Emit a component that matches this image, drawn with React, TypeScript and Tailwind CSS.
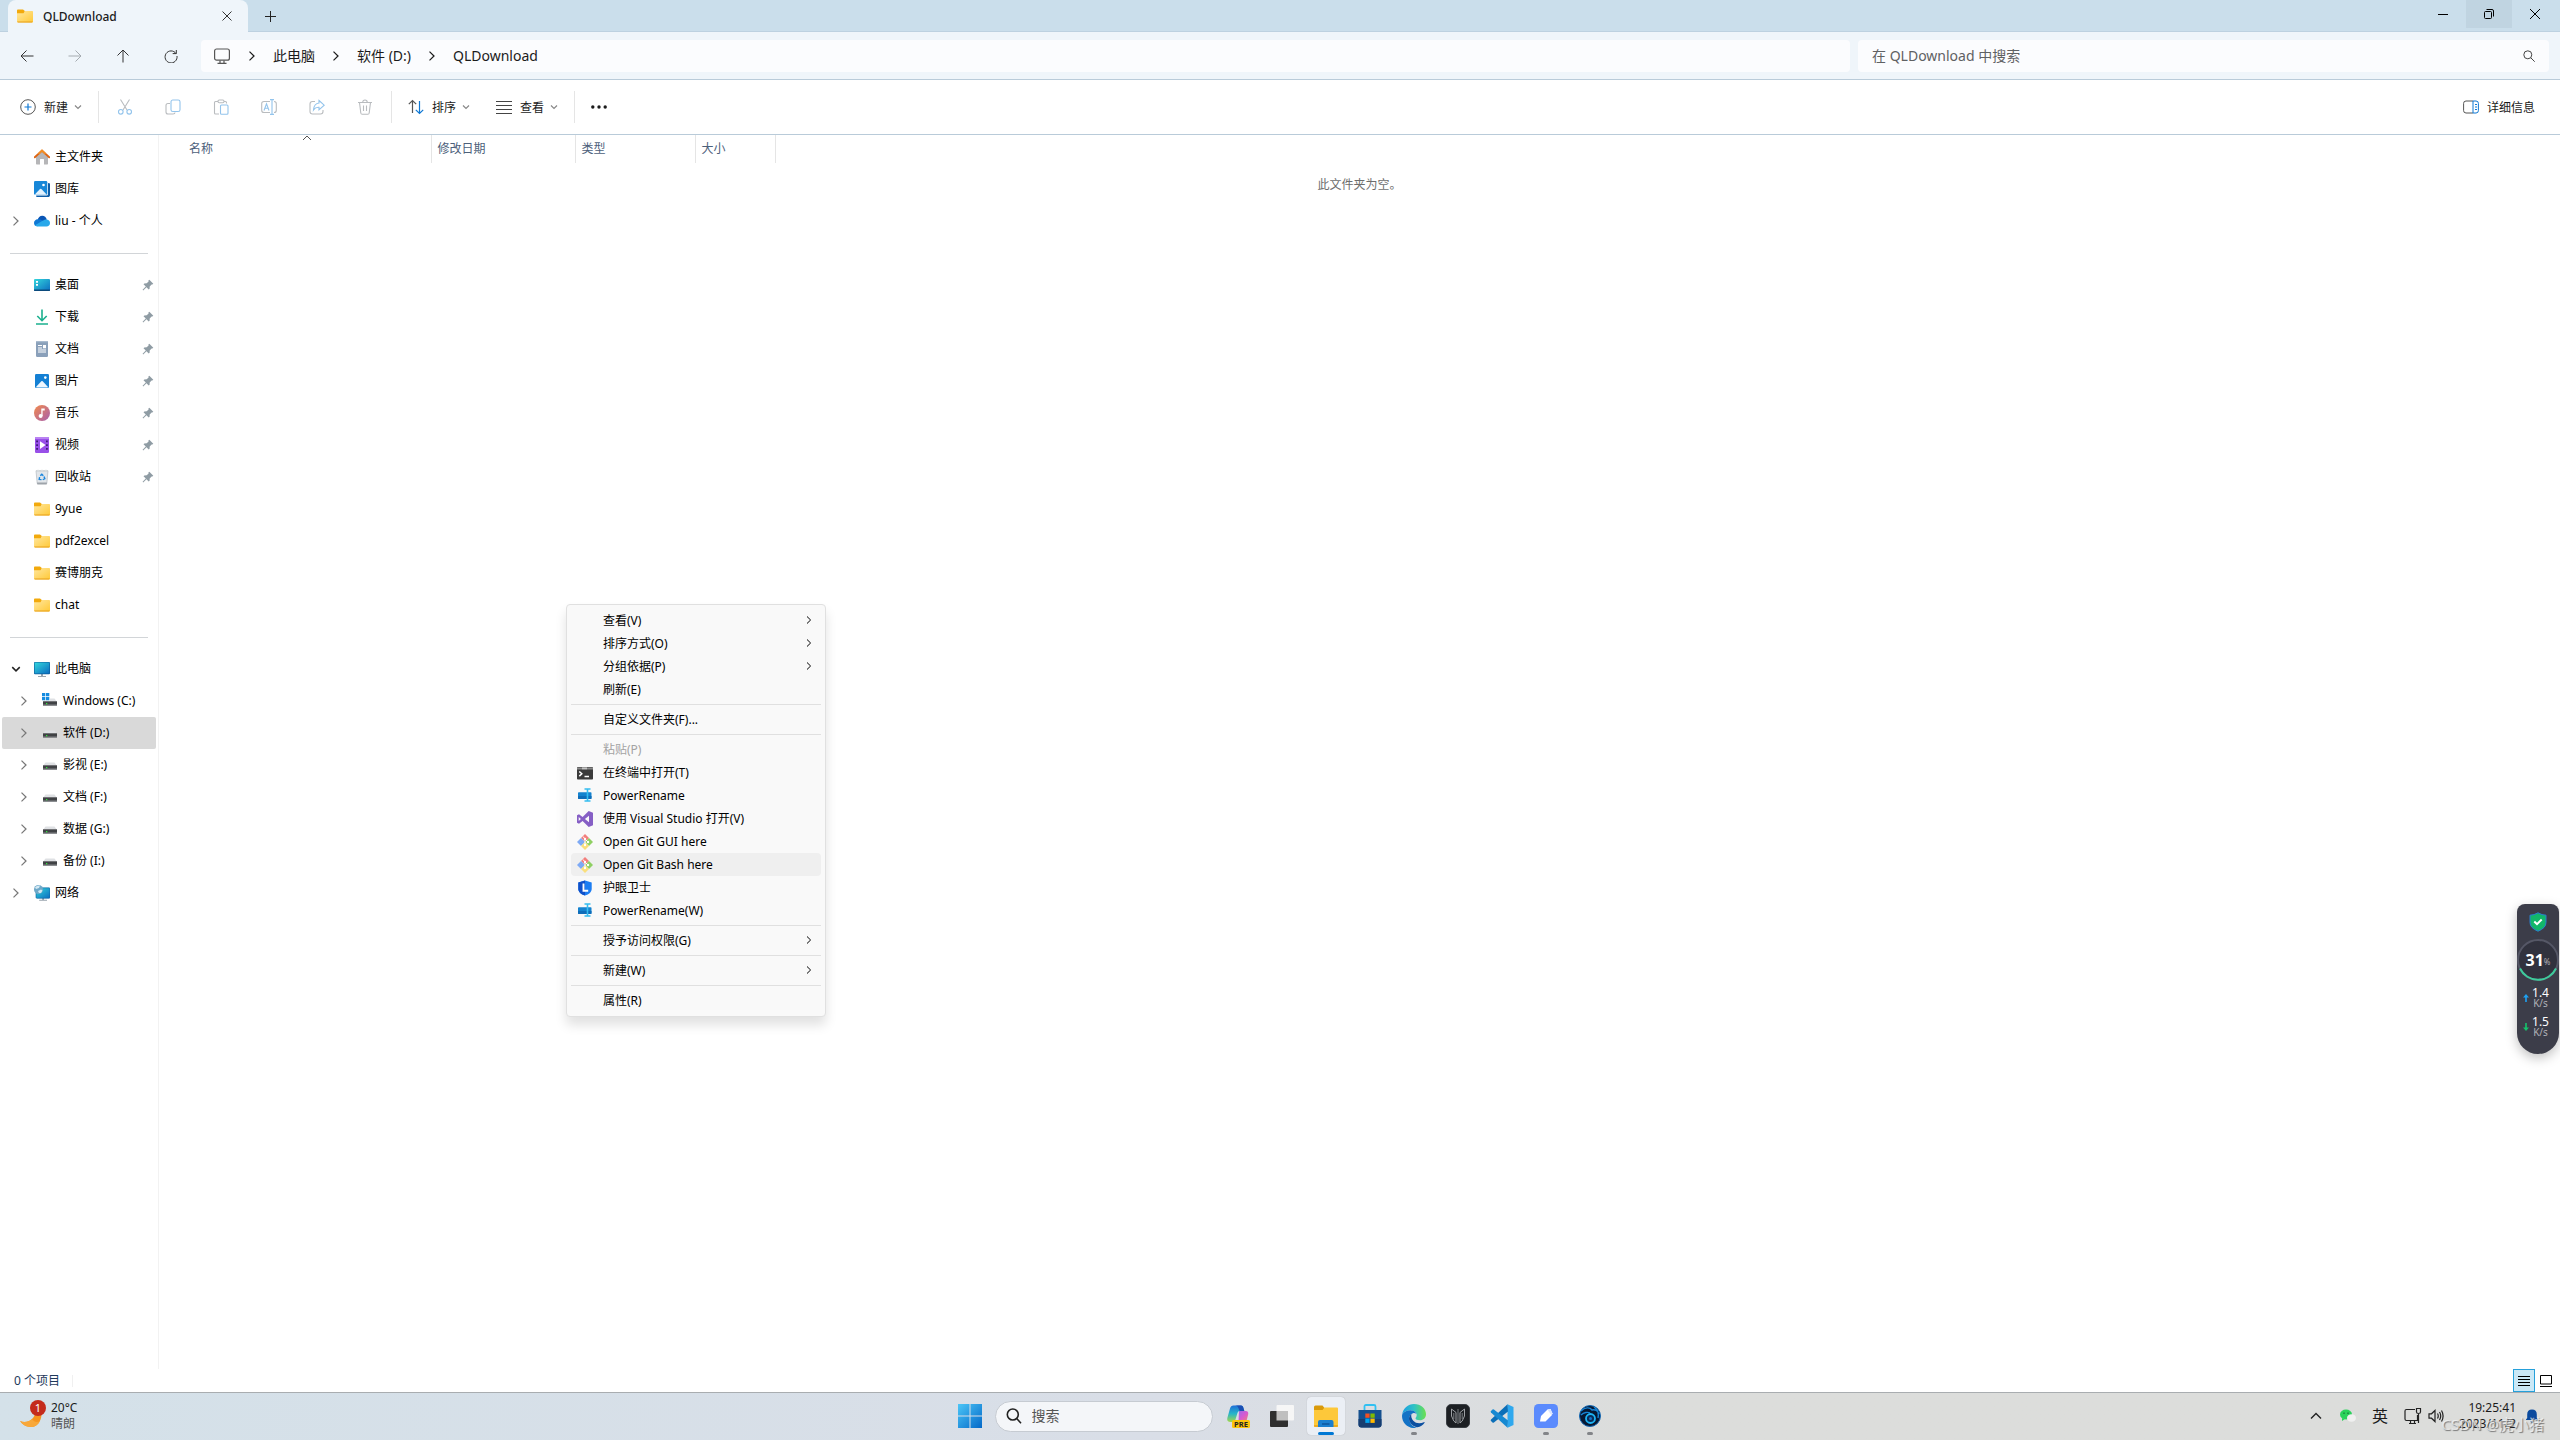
import type { ReactNode } from 'react';

type IconProps = { className?: string };

interface NavItem {
  label: string;
  icon: ReactNode;
  pinned?: boolean;
  expand?: 'closed' | 'open';
  nested?: boolean;
  active?: boolean;
}

interface MenuItem {
  label: string;
  icon?: ReactNode;
  submenu?: boolean;
  disabled?: boolean;
  hovered?: boolean;
}

function Chevron({ className = 'h-2 w-2' }: IconProps) {
  return (
    <svg viewBox="0 0 8 8" className={className} fill="none" stroke="currentColor">
      <path d="M2 0.5 5.6 4 2 7.5" />
    </svg>
  );
}

function ChevronDown({ className = 'h-2 w-2' }: IconProps) {
  return (
    <svg viewBox="0 0 8 8" className={className} fill="none" stroke="currentColor" strokeWidth="1.2">
      <path d="M1 2.5 4 5.5 7 2.5" />
    </svg>
  );
}

function FolderIcon({ className = 'h-4 w-4' }: IconProps) {
  return (
    <svg viewBox="0 0 16 16" className={className}>
      <defs>
        <linearGradient id="folder" x1="0" y1="0" x2="1" y2="1">
          <stop offset="0" stopColor="#ffe7a0" />
          <stop offset="1" stopColor="#ffc937" />
        </linearGradient>
      </defs>
      <path d="M0 2.6C0 2 .5 1.5 1 1.5h5L7.8 3v3H0z" fill="#f2a90c" />
      <path d="M0 5.2h6.5L8 3h7c.6 0 1 .4 1 1v9.400c0 .6-.4 1-1 1H1c-.6 0-1-.4-1-1z" fill="url(#folder)" />
      <path d="M.2 13.600h15.600c-.1.500-.4.800-.8.800H1c-.4 0-.7-.3-.8-.8z" fill="#e8a01c" />
    </svg>
  );
}

function HomeIcon() {
  return (
    <svg viewBox="0 0 16 16" className="h-4 w-4">
      <path d="M2 7.500 8 2l6 5.500V14.500c0 .6-.3 1-1 1h-3V10.500c0-.4-.2-.6-.6-.6H6.600c-.4 0-.6.2-.6.6v5H3c-.6 0-1-.4-1-1z" fill="#b6b6b8" />
      <path d="M.8 8.300 8 1.600l7.200 6.700" fill="none" stroke="#dd6412" strokeWidth="1.900" strokeLinecap="round" strokeLinejoin="round" />
      <path d="M4.500 4.900 8 1.600l3.500 3.300" fill="none" stroke="#f28d22" strokeWidth="1.900" />
    </svg>
  );
}

function GalleryIcon() {
  return (
    <svg viewBox="0 0 16 16" className="h-4 w-4">
      <path d="M14.500 2c1 0 1.500.5 1.500 1.500V14c0 1.500-.8 2-2 2H3.500C2.500 16 2 15.500 2 14.500z" fill="#0f5ea8" />
      <rect width="14" height="14.500" rx="1.500" fill="#fff" />
      <rect width="13.300" height="13.800" rx="1.300" fill="#1787d8" />
      <path d="M1 13.300 6 8q.7-.7 1.400 0l5 5.300q-.3.500-1 .5H2q-.7 0-1-.5z" fill="#e4f2fd" />
      <circle cx="9.500" cy="4" r="1.300" fill="#fff" />
    </svg>
  );
}

function CloudIcon() {
  return (
    <svg viewBox="0 0 16 16" className="h-4 w-4">
      <path d="M3.500 7.500C4 4.500 6 2.800 8.300 2.800c2.200 0 3.800 1.500 4.500 3.700L9 9z" fill="#0a55b5" />
      <path d="M3.800 6.200C1.500 6.200 0 8 0 10c0 2 1.300 3.300 3.200 3.300L12 9C9 8 6.500 6 3.800 6.200z" fill="#0f78d4" />
      <path d="M12.400 6.400c2 0 3.600 1.500 3.600 3.500 0 2-1.500 3.500-3.500 3.500H3.400c-1 0-1.900-.5-2.400-1.200L9 7.600c1-.7 2-1.200 3.400-1.200z" fill="#28a8ea" />
    </svg>
  );
}

function DesktopIcon() {
  return (
    <svg viewBox="0 0 16 16" className="h-4 w-4">
      <defs>
        <linearGradient id="screen" x1="0" y1="0" x2="1" y2="1">
          <stop offset="0" stopColor="#33d6dc" />
          <stop offset="1" stopColor="#0c6cc0" />
        </linearGradient>
      </defs>
      <rect y="2" width="16" height="12" rx="1" fill="url(#screen)" />
      <path d="M0 12.500h16v.5c0 .6-.4 1-1 1H1c-.6 0-1-.4-1-1z" fill="#0b4a7c" />
      <path d="M2 4h2v1.800H2zM2 7h2v1.800H2z" fill="#fff" />
    </svg>
  );
}

function DownloadIcon() {
  return (
    <svg viewBox="0 0 16 16" className="h-4 w-4" fill="none" stroke="#1bb08e" strokeWidth="1.600">
      <path d="M8 .5v11M3.300 7 8 11.700 12.700 7M2 15h12" />
    </svg>
  );
}

function DocumentIcon() {
  return (
    <svg viewBox="0 0 16 16" className="h-4 w-4">
      <rect x="2" width="12" height="16" rx="1.200" fill="#8aa0ba" />
      <path d="M2 1.200C2 .5 2.500 0 3.200 0h9.600c.7 0 1.200.5 1.200 1.200z" fill="#a9bbcf" />
      <path d="M4 4.500h4M4 7h4M4 9h8M4 11h8" stroke="#fff" strokeWidth="1.100" />
      <rect x="9" y="4" width="3" height="3.300" fill="#fff" />
    </svg>
  );
}

function PictureIcon() {
  return (
    <svg viewBox="0 0 16 16" className="h-4 w-4">
      <rect x="1" y="1" width="14" height="14" rx="1.200" fill="#1480d4" />
      <path d="m2 14 5.300-5.700q.7-.6 1.400 0L14 14q-.4.500-1 .5H3q-.6 0-1-.5z" fill="#eef7ff" />
      <circle cx="11.300" cy="4.600" r="1.300" fill="#fff" />
    </svg>
  );
}

function MusicIcon() {
  return (
    <svg viewBox="0 0 16 16" className="h-4 w-4">
      <defs>
        <linearGradient id="music" x1="0" y1="0" x2="1" y2="1">
          <stop offset="0" stopColor="#f28a4c" />
          <stop offset="1" stopColor="#a75fae" />
        </linearGradient>
      </defs>
      <circle cx="8" cy="8" r="8" fill="url(#music)" />
      <circle cx="6.600" cy="11" r="2" fill="#fff" />
      <path d="M7.300 11V3.400h3.400v2.200H8.600V11z" fill="#fff" />
    </svg>
  );
}

function VideoIcon() {
  return (
    <svg viewBox="0 0 16 16" className="h-4 w-4">
      <rect x="1" width="14" height="16" rx="1.200" fill="#9950e8" />
      <path d="M1 1.200C1 .5 1.500 0 2.200 0h11.600c.7 0 1.200.5 1.200 1.200V2H1z" fill="#b982f2" />
      <path d="M2.200 3.500h1.800v1.800H2.200zM2.200 7.200h1.800V9H2.200zM2.200 11h1.800v1.800H2.200zM12 3.500h1.800v1.800H12zM12 7.200h1.800V9H12zM12 11h1.800v1.800H12z" fill="#3f1c78" />
      <path d="m6 4.300 5.600 3.800L6 12z" fill="#fff" />
    </svg>
  );
}

function RecycleIcon() {
  return (
    <svg viewBox="0 0 16 16" className="h-4 w-4">
      <path d="M2 1.800h12l-1.200 12.700H3.200z" fill="#e2e6ea" stroke="#b4bac0" strokeWidth=".7" />
      <path d="M3.100 13.500h9.800l-.2 2H3.300z" fill="#9ea4aa" />
      <path d="M2 2.200 4 1l2 1 2-1 2 1 2-1 2 1.200z" fill="#f6f7f8" stroke="#c3c8cc" strokeWidth=".5" />
      <path d="m6.300 6.800 1.500-1.600 1.500 1.600M10 7.600l.8 2.100-2 .9M7.500 10.600l-2.300-.2.400-2.300" fill="none" stroke="#1a86dd" strokeWidth="1.400" />
    </svg>
  );
}

function ComputerIcon() {
  return (
    <svg viewBox="0 0 16 16" className="h-4 w-4">
      <path d="M7 13h2v2h3v1H4v-1h3z" fill="#9aa5ae" />
      <rect y="1" width="16" height="12.300" rx="1" fill="#0a5c9c" />
      <rect x=".6" y="1.600" width="14.800" height="11" rx=".6" fill="url(#screen)" />
    </svg>
  );
}

function DriveIcon({ windows = false }: { windows?: boolean }) {
  return (
    <svg viewBox="0 0 16 16" className="h-4 w-4">
      <path d="M3.500 5.500h9l2.400 3.200H1.100z" fill="#dfe1e4" />
      <rect x="1" y="8.300" width="14" height="4.500" fill="#404245" />
      <path d="M1 11.600h14v1.200H1z" fill="#96999c" />
      <path d="M4 10h1.300v1.200H4z" fill="#33e53c" />
      {windows && (
        <>
          <path d="M0 0h8v7.600H0z" fill="#fff" />
          <path d="M0 0h3.300v3.200H0zM4 0h3.300v3.200H4zM0 4h3.300v3.200H0zM4 4h3.300v3.200H4z" fill="#148be0" />
        </>
      )}
    </svg>
  );
}

function NetworkIcon() {
  return (
    <svg viewBox="0 0 16 16" className="h-4 w-4">
      <path d="M8.200 13h1.800v1.800h3v1H5.200v-1h3z" fill="#9aa5ae" />
      <rect x="2" y="2.800" width="14" height="10.500" rx="1" fill="url(#screen)" stroke="#0a5c9c" strokeWidth=".6" />
      <circle cx="4.500" cy="4.500" r="4.500" fill="#6fa8c8" />
      <path d="M1 2.500q2-2.500 5-2L5 3 2 4zM4 6l3-1.500 1.500 1L7 8H5z" fill="#d3e9f4" />
    </svg>
  );
}

function PinIcon() {
  return (
    <svg viewBox="0 0 12 12" className="h-3 w-3" fill="#8f9ca4">
      <path d="M7.300.8 11.300 4.800 10.300 5.600 9.600 5.400 7.700 7.400 7.600 9.800 6.700 10.500 4.500 8.200 1.200 11.400.6 10.800 3.800 7.500 1.500 5.300 2.300 4.400 4.700 4.300 6.600 2.400 6.400 1.600z" />
    </svg>
  );
}

function TerminalIcon() {
  return (
    <svg viewBox="0 0 16 16" className="h-4 w-4">
      <rect y="2" width="16" height="12.500" rx=".8" fill="#3b3b3b" />
      <path d="M0 2.600h5V4.500H0zM10 2.600h6V4.500h-6z" fill="#8b8b8b" />
      <path d="M5 2.300h5v2.200H5z" fill="#c4c4c4" />
      <path d="m2.300 6.500 2.500 2.300-2.500 2.300M7.500 11.500H12" fill="none" stroke="#fff" strokeWidth="1.500" />
    </svg>
  );
}

function RenameIcon() {
  return (
    <svg viewBox="0 0 16 16" className="h-4 w-4">
      <rect x="1" y="4.300" width="13.500" height="6.700" rx=".8" fill="#1583cf" />
      <path d="M1 8h13.500v2.200q0 .8-.8.8H1.800q-.8 0-.8-.8z" fill="#0f6db9" />
      <path d="M7.500 1h6M7.500 13h6M10.500 1v12" stroke="#35bdf0" strokeWidth="1.600" />
    </svg>
  );
}

function VisualStudioIcon() {
  return (
    <svg viewBox="0 0 16 16" className="h-4 w-4">
      <path fillRule="evenodd" d="M11.700 0 16 1.800v12.400L11.700 16 5.600 10 2 12.800l-2-1V4.200l2-1L5.600 6zM12 4.700 7.900 8 12 11.300zM1.700 5.900v4.200L3.900 8z" fill="#865fc5" />
    </svg>
  );
}

function GitIcon() {
  return (
    <svg viewBox="0 0 16 16" className="h-4 w-4">
      <path d="m8 0 4 4-4 4-4-4z" fill="#f27f7d" />
      <path d="m4 4 4 4-4 4-4-4z" fill="#7eaaf5" />
      <path d="m12 4 4 4-4 4-4-4z" fill="#8fd063" />
      <path d="m8 8 4 4-4 4-4-4z" fill="#fadf7d" />
      <path d="M5.800 2.500 8 4.700v6.500M8 5l3 3" fill="none" stroke="#fff" strokeWidth="1" />
      <circle cx="8" cy="5" r="1.200" fill="#fff" />
      <circle cx="8" cy="11" r="1.200" fill="#fff" />
      <circle cx="11" cy="8" r="1.200" fill="#fff" />
    </svg>
  );
}

function EyeShieldIcon() {
  return (
    <svg viewBox="0 0 16 16" className="h-4 w-4">
      <path d="M8 .4 14.700 2.500v6.200c0 3.300-2.700 5.600-6.700 6.900-4-1.300-6.700-3.600-6.700-6.900V2.500z" fill="#1c7df2" />
      <path d="M8 .4v15.200c-4-1.300-6.700-3.600-6.700-6.900V2.500z" fill="#1050c8" />
      <path d="M6.500 3.500v7.300h4.700" fill="none" stroke="#fff" strokeWidth="1.900" />
    </svg>
  );
}

const NAV: NavItem[][] = [
  [
    { label: '主文件夹', icon: <HomeIcon /> },
    { label: '图库', icon: <GalleryIcon /> },
    { label: 'liu - 个人', icon: <CloudIcon />, expand: 'closed' },
  ],
  [
    { label: '桌面', icon: <DesktopIcon />, pinned: true },
    { label: '下载', icon: <DownloadIcon />, pinned: true },
    { label: '文档', icon: <DocumentIcon />, pinned: true },
    { label: '图片', icon: <PictureIcon />, pinned: true },
    { label: '音乐', icon: <MusicIcon />, pinned: true },
    { label: '视频', icon: <VideoIcon />, pinned: true },
    { label: '回收站', icon: <RecycleIcon />, pinned: true },
    { label: '9yue', icon: <FolderIcon /> },
    { label: 'pdf2excel', icon: <FolderIcon /> },
    { label: '赛博朋克', icon: <FolderIcon /> },
    { label: 'chat', icon: <FolderIcon /> },
  ],
  [
    { label: '此电脑', icon: <ComputerIcon />, expand: 'open' },
    { label: 'Windows (C:)', icon: <DriveIcon windows />, expand: 'closed', nested: true },
    { label: '软件 (D:)', icon: <DriveIcon />, expand: 'closed', nested: true, active: true },
    { label: '影视 (E:)', icon: <DriveIcon />, expand: 'closed', nested: true },
    { label: '文档 (F:)', icon: <DriveIcon />, expand: 'closed', nested: true },
    { label: '数据 (G:)', icon: <DriveIcon />, expand: 'closed', nested: true },
    { label: '备份 (I:)', icon: <DriveIcon />, expand: 'closed', nested: true },
    { label: '网络', icon: <NetworkIcon />, expand: 'closed' },
  ],
];

const MENU: MenuItem[][] = [
  [
    { label: '查看(V)', submenu: true },
    { label: '排序方式(O)', submenu: true },
    { label: '分组依据(P)', submenu: true },
    { label: '刷新(E)' },
  ],
  [{ label: '自定义文件夹(F)...' }],
  [
    { label: '粘贴(P)', disabled: true },
    { label: '在终端中打开(T)', icon: <TerminalIcon /> },
    { label: 'PowerRename', icon: <RenameIcon /> },
    { label: '使用 Visual Studio 打开(V)', icon: <VisualStudioIcon /> },
    { label: 'Open Git GUI here', icon: <GitIcon /> },
    { label: 'Open Git Bash here', icon: <GitIcon />, hovered: true },
    { label: '护眼卫士', icon: <EyeShieldIcon /> },
    { label: 'PowerRename(W)', icon: <RenameIcon /> },
  ],
  [{ label: '授予访问权限(G)', submenu: true }],
  [{ label: '新建(W)', submenu: true }],
  [{ label: '属性(R)' }],
];

function TitleBar() {
  return (
    <header className="flex h-8 items-start border-b border-[#bdd1e0] bg-[#cadeeb] pr-0.5">
      <div className="ml-2 flex h-8 w-60 items-center rounded-t-lg bg-[#eff5fa] pr-[11px] pl-[9px]">
        <FolderIcon />
        <span className="ml-2.5 flex-1 pt-0.5 text-xs font-medium">QLDownload</span>
        <button aria-label="关闭标签页" className="flex h-5 w-5 items-center justify-center">
          <svg viewBox="0 0 10 10" className="h-2.5 w-2.5" stroke="#333" fill="none">
            <path d="m.5.5 9 9M9.500.5l-9 9" />
          </svg>
        </button>
      </div>
      <button aria-label="新建标签页" className="ml-3 flex h-8 w-5 items-center justify-center">
        <svg viewBox="0 0 11 11" className="h-[11px] w-[11px]" stroke="#222" fill="none">
          <path d="M5.500 0v11M0 5.500h11" />
        </svg>
      </button>
      <div className="ml-auto flex">
        <button aria-label="最小化" className="flex h-7 w-[46px] items-center justify-center">
          <svg viewBox="0 0 10 10" className="h-2.5 w-2.5" stroke="#000" fill="none">
            <path d="M0 5.500h10" />
          </svg>
        </button>
        <button aria-label="还原" className="flex h-7 w-[46px] items-center justify-center bg-[#c0d4e1]">
          <svg viewBox="0 0 10 10" className="h-2.5 w-2.5" stroke="#000" fill="none">
            <rect x=".5" y="2.500" width="7" height="7" rx="1" />
            <path d="M2.500.5H8q1.500 0 1.500 1.500v5.500" />
          </svg>
        </button>
        <button aria-label="关闭" className="flex h-7 w-[46px] items-center justify-center">
          <svg viewBox="0 0 10 10" className="h-2.5 w-2.5" stroke="#000" fill="none">
            <path d="m0 0 10 10M10 0 0 10" />
          </svg>
        </button>
      </div>
    </header>
  );
}

function NavBar() {
  return (
    <div className="flex h-12 items-center border-b border-[#b9cbd9] bg-[#eff5fa] pr-[11px] text-sm">
      <div className="flex w-[201px] shrink-0 pl-[3px] text-[#333]">
        <button aria-label="后退" className="flex w-12 justify-center">
          <svg viewBox="0 0 14 14" className="h-3.5 w-3.5" stroke="currentColor" fill="none">
            <path d="M13.500 7H1M6.500 1.500 1 7l5.500 5.500" />
          </svg>
        </button>
        <button aria-label="前进" className="flex w-12 justify-center text-[#a5abb0]">
          <svg viewBox="0 0 14 14" className="h-3.5 w-3.5" stroke="currentColor" fill="none">
            <path d="M.5 7H13M7.500 1.500 13 7l-5.500 5.500" />
          </svg>
        </button>
        <button aria-label="向上" className="flex w-12 justify-center">
          <svg viewBox="0 0 14 14" className="h-3.5 w-3.5" stroke="currentColor" fill="none">
            <path d="M7 13.500V1M1.500 6.500 7 1l5.500 5.500" />
          </svg>
        </button>
        <button aria-label="刷新" className="flex w-12 justify-center">
          <svg viewBox="0 0 14 14" className="h-3.5 w-3.5" stroke="currentColor" fill="none">
            <path d="M12 4.500A6 6 0 1 0 13 7M12.300 1v3.600H8.700" />
          </svg>
        </button>
      </div>
      <nav aria-label="地址" className="flex h-8 flex-[1636] items-center rounded bg-[#fbfcfe] pl-[13px] whitespace-nowrap text-[#1b1b1b]">
        <svg viewBox="0 0 16 16" className="h-4 w-4" stroke="#555" fill="none" strokeWidth="1.200">
          <rect x=".6" y="1" width="14.800" height="11.200" rx="2" />
          <path d="M6 12.500V15M10 12.500V15M3.500 15.300h9" />
        </svg>
        <Chevron className="ml-[17px] h-2.5 w-2.5" />
        <a href="#pc" className="ml-4">此电脑</a>
        <Chevron className="ml-4 h-2.5 w-2.5" />
        <a href="#d" className="ml-4">软件 (D:)</a>
        <Chevron className="ml-4 h-2.5 w-2.5" />
        <a href="#folder" className="ml-4">QLDownload</a>
      </nav>
      <label className="ml-2 flex h-8 flex-[663] items-center rounded bg-[#fbfcfe] pr-3.5 pl-3.5">
        <input
          aria-label="在 QLDownload 中搜索"
          placeholder="在 QLDownload 中搜索"
          className="min-w-0 flex-1 bg-transparent outline-none placeholder:text-[#5f6163]"
        />
        <svg viewBox="0 0 12 12" className="h-3 w-3" stroke="#444" fill="none">
          <circle cx="4.800" cy="4.800" r="4" />
          <path d="m7.700 7.700 4 4" />
        </svg>
      </label>
    </div>
  );
}

function ToolButton({ label, children }: { label: string; children: ReactNode }) {
  return (
    <button disabled aria-label={label} className="flex w-12 justify-center">
      <svg viewBox="0 0 16 16" className="h-4 w-4" fill="none" stroke="#b9bcbf" strokeWidth="1.100">
        {children}
      </svg>
    </button>
  );
}

function CommandBar() {
  return (
    <div className="flex h-[55px] items-center border-b border-[#b9cbd9] bg-white text-xs text-[#1b1b1b]">
      <button className="flex items-center pl-5">
        <svg viewBox="0 0 16 16" className="h-4 w-4" fill="none">
          <circle cx="8" cy="8" r="7.300" stroke="#555" />
          <path d="M8 4.500v7M4.500 8h7" stroke="#0f78d4" strokeWidth="1.200" />
        </svg>
        <span className="ml-2 pt-px">新建</span>
        <ChevronDown className="ml-1.5 h-2 w-2 text-[#888]" />
      </button>
      <div className="ml-4 h-8 w-px bg-[#e5e5e5]" />
      <div className="ml-0.5 flex">
        <ToolButton label="剪切">
          <path d="M3.500.5 10 11M12.500.5 6 11" />
          <circle cx="3.800" cy="12.800" r="2.300" stroke="#93c4ec" />
          <circle cx="12.200" cy="12.800" r="2.300" stroke="#93c4ec" />
        </ToolButton>
        <ToolButton label="复制">
          <path d="M5 4.500H3Q1 4.500 1 6.500V13q0 2 2 2h5q2 0 2-1.500" />
          <rect x="6" y="1" width="9" height="11.500" rx="1.800" stroke="#93c4ec" />
        </ToolButton>
        <ToolButton label="粘贴">
          <path d="M5 2.500H2.500Q1.500 2.500 1.500 3.500v10.500q0 1 1 1H6M11 2.500h1.500q1 0 1 1v1" />
          <rect x="5" y="1" width="6" height="2.800" rx="1.200" />
          <rect x="7.500" y="6" width="7.500" height="9.300" rx="1" stroke="#93c4ec" />
        </ToolButton>
        <ToolButton label="重命名">
          <path d="M9 2.500H3Q.7 2.500.7 4.800v6.400Q.7 13.500 3 13.500h6M13 2.500q2.300 0 2.300 2.300v6.400q0 2.300-2.300 2.300" />
          <path d="M9 .6h4M9 15.400h4M11 .6v14.800M3 11.500 5.500 4.800 8 11.500M3.900 9.300h3.200" stroke="#93c4ec" />
        </ToolButton>
        <ToolButton label="共享">
          <path d="M6 2.500H3.500Q1 2.500 1 5v7.500Q1 15 3.500 15h8q2.500 0 2.500-2.500V11" />
          <path d="m10 1.500 5.200 4.700L10 10.800V8.300Q6.500 8 4.500 11 5 4.500 10 4z" stroke="#93c4ec" />
        </ToolButton>
        <ToolButton label="删除">
          <path d="M1 3.500h14M5.800 3.300Q5.800 1 8 1t2.200 2.300M2.500 3.500 3.800 14q.2 1.300 1.400 1.300h5.600q1.200 0 1.400-1.300l1.300-10.500M6.500 6.500v5.500M9.500 6.500v5.500" />
        </ToolButton>
      </div>
      <div className="ml-0.5 h-8 w-px bg-[#e5e5e5]" />
      <button className="ml-4 flex items-center">
        <svg viewBox="0 0 16 16" className="h-4 w-4" fill="none" strokeWidth="1.200">
          <path d="M4.500 14V1.500M.8 5.200l3.700-3.700 3.700 3.700" stroke="#555" />
          <path d="M11.500 2v12.500M7.800 10.800l3.700 3.700 3.700-3.700" stroke="#0f78d4" />
        </svg>
        <span className="ml-2 pt-px">排序</span>
        <ChevronDown className="ml-1.5 h-2 w-2 text-[#888]" />
      </button>
      <button className="ml-[26px] flex items-center">
        <svg viewBox="0 0 16 16" className="h-4 w-4" stroke="#444">
          <path d="M0 2.500h16M0 6.500h16M0 10.500h16M0 14.500h16" />
        </svg>
        <span className="ml-2 pt-px">查看</span>
        <ChevronDown className="ml-1.5 h-2 w-2 text-[#888]" />
      </button>
      <div className="ml-4 h-8 w-px bg-[#e5e5e5]" />
      <button aria-label="查看更多" className="ml-4 flex">
        <svg viewBox="0 0 16 16" className="h-4 w-4" fill="#1b1b1b">
          <circle cx="1.800" cy="8" r="1.700" />
          <circle cx="8" cy="8" r="1.700" />
          <circle cx="14.200" cy="8" r="1.700" />
        </svg>
      </button>
      <button className="mr-[25px] ml-auto flex items-center">
        <svg viewBox="0 0 16 16" className="h-4 w-4" fill="none">
          <path d="M10 2H3Q.6 2 .6 4.400v7.200Q.6 14 3 14h7" stroke="#555" />
          <path d="M10 2v12h3q2.400 0 2.400-2.400V4.400Q15.400 2 13 2zM12 5.500h2M12 8h2M12 10.500h2" stroke="#0f78d4" />
        </svg>
        <span className="ml-2 pt-px">详细信息</span>
      </button>
    </div>
  );
}

function NavRow({ item }: { item: NavItem }) {
  return (
    <li>
      <button
        className={`flex h-8 w-[154px] items-center rounded-xs pr-0.5 ${
          item.nested ? 'pl-[17px]' : 'pl-[9px]'
        } ${item.active ? 'bg-[#d9d9d9]' : ''}`}
      >
        <span className="flex w-[23px] shrink-0">
          {item.expand === 'closed' && <Chevron className="h-2.5 w-2.5 text-[#777]" />}
          {item.expand === 'open' && <ChevronDown className="h-2.5 w-2.5 text-[#222]" />}
        </span>
        {item.icon}
        <span className="ml-[5px] flex-1 text-left whitespace-nowrap">{item.label}</span>
        {item.pinned && <PinIcon />}
      </button>
    </li>
  );
}

function Sidebar() {
  return (
    <aside className="w-[159px] shrink-0 border-r border-[#f2f2f2] pt-1.5 pl-0.5 text-xs text-black">
      {NAV.map((group, i) => (
        <div key={i}>
          {i > 0 && (
            <div className="flex h-8 items-center pr-2.5 pl-2">
              <div className="h-px w-full bg-[#d2d5d8]" />
            </div>
          )}
          <ul>
            {group.map((item) => (
              <NavRow key={item.label} item={item} />
            ))}
          </ul>
        </div>
      ))}
    </aside>
  );
}

function FileList() {
  return (
    <main className="relative flex-1 text-xs">
      <svg viewBox="0 0 10 6" className="absolute top-0 left-[143px] h-1.5 w-2.5" fill="none" stroke="#555">
        <path d="m1 5 4-4 4 4" />
      </svg>
      <table className="ml-[22px] table-fixed text-left text-[#4c607a]">
        <thead>
          <tr className="h-7">
            <th className="w-[250px] border-r border-[#e5e5e5] pl-2 font-normal">名称</th>
            <th className="w-36 border-r border-[#e5e5e5] pl-1.5 font-normal">修改日期</th>
            <th className="w-[120px] border-r border-[#e5e5e5] pl-1.5 font-normal">类型</th>
            <th className="w-20 border-r border-[#e5e5e5] pl-1.5 font-normal">大小</th>
          </tr>
        </thead>
      </table>
      <p className="mt-3 text-center leading-5 text-[#6d6d6d]">此文件夹为空。</p>
    </main>
  );
}

function StatusBar() {
  return (
    <footer className="flex h-[23px] items-center bg-white pr-[3px] pl-3.5 text-xs text-[#1e395b]">
      <span>0 个项目</span>
      <div className="ml-3 h-3 w-px bg-[#f0f0f0]" />
      <button aria-label="详细信息视图" className="ml-auto flex h-[23px] w-[22px] items-center justify-center border border-[#26a0da] bg-[#cbe8f6]">
        <svg viewBox="0 0 12 12" className="h-3 w-3" stroke="#000">
          <path d="M0 1.500h12M0 4.500h12M0 7.500h12M0 10.500h12" />
        </svg>
      </button>
      <button aria-label="大缩略图" className="flex h-[23px] w-[22px] items-center justify-center">
        <svg viewBox="0 0 12 12" className="h-3 w-3" stroke="#000" fill="none">
          <path d="M.5.5h11v8.500H.5zM0 11.500h12" />
        </svg>
      </button>
    </footer>
  );
}

function ContextMenu() {
  return (
    <div
      role="menu"
      className="absolute top-[604px] left-[566px] w-[260px] rounded border border-[#e0e0e0] bg-[#f9f9f9] px-1 py-1 text-xs text-black shadow-[0_8px_12px_rgba(0,0,0,0.12)]"
    >
      {MENU.map((group, i) => (
        <div key={i}>
          {i > 0 && <div className="my-[3px] h-px bg-[#e0e0e0]" />}
          {group.map((item) => (
            <button
              key={item.label}
              role="menuitem"
              disabled={item.disabled}
              className={`flex h-[23px] w-full items-center rounded pr-2 pl-1.5 ${
                item.disabled ? 'text-[#a3a3a3]' : ''
              } ${item.hovered ? 'bg-[#efefef]' : ''}`}
            >
              <span className="h-4 w-4">{item.icon}</span>
              <span className="ml-2.5 flex-1 text-left">{item.label}</span>
              {item.submenu && <Chevron className="mb-0.5 h-2 w-2" />}
            </button>
          ))}
        </div>
      ))}
    </div>
  );
}

function SpeedRow({ value, children }: { value: string; children: ReactNode }) {
  return (
    <div className="flex items-center gap-[3px]">
      {children}
      <div className="text-center text-xs leading-[10px]">
        {value}
        <div className="text-[10px] leading-[10px] text-[#b0b1b8]">K/s</div>
      </div>
    </div>
  );
}

function SpeedWidget() {
  return (
    <div className="absolute top-[904px] right-px flex h-[150px] w-[42px] flex-col items-center rounded-t-lg rounded-b-[21px] bg-[#3c3d49] pt-2 text-white shadow-[0_4px_12px_rgba(0,0,0,0.25)]">
      <svg viewBox="0 0 18 20" className="h-5 w-[18px]">
        <path d="M9 .8q4 2.400 8 2.400v7.300q0 5.500-8 8.700-8-3.200-8-8.700V3.200q4 0 8-2.400z" fill="#12b76a" stroke="#2b7fd0" />
        <path d="m5.300 9.500 2.700 2.700 4.700-4.700" fill="none" stroke="#fff" strokeWidth="2" />
      </svg>
      <div className="relative mt-2 flex h-10 w-[42px] items-center justify-center">
        <svg viewBox="0 0 42 42" className="absolute -top-px left-0 h-[42px] w-[42px]" fill="none">
          <circle cx="21" cy="21" r="20" fill="#31323e" stroke="#555766" strokeWidth="2" />
          <path d="M3 29.500a20 20 0 0 0 36 0" stroke="#3ecb9c" strokeWidth="2" />
        </svg>
        <span className="relative text-base font-bold">31</span>
        <span className="relative pt-1 text-[8px] text-[#b0b1b8]">%</span>
      </div>
      <div className="mt-2 mr-1 flex flex-col gap-[9px]">
        <SpeedRow value="1.4">
          <svg viewBox="0 0 6 8" className="h-2 w-1.5" fill="#1ea1f2">
            <path d="m3 0 3 3.500H3.800V8H2.200V3.500H0z" />
          </svg>
        </SpeedRow>
        <SpeedRow value="1.5">
          <svg viewBox="0 0 6 8" className="h-2 w-1.5" fill="#14c26b">
            <path d="m3 8 3-3.500H3.800V0H2.200v4.500H0z" />
          </svg>
        </SpeedRow>
      </div>
    </div>
  );
}

function CopilotIcon() {
  return (
    <svg viewBox="0 0 24 24" className="h-6 w-6">
      <defs>
        <linearGradient id="copA" x1="0" y1="0" x2="0" y2="1">
          <stop offset="0" stopColor="#1f6fd8" />
          <stop offset=".5" stopColor="#27b5c9" />
          <stop offset="1" stopColor="#a5d84a" />
        </linearGradient>
        <linearGradient id="copB" x1="0" y1="0" x2="1" y2="1">
          <stop offset="0" stopColor="#8c6ff0" />
          <stop offset=".5" stopColor="#d85ad0" />
          <stop offset="1" stopColor="#f58a5c" />
        </linearGradient>
      </defs>
      <path d="M13 7h6.500c2.500 0 3.200 1.600 2.600 3.800L20.500 17c-.6 2-1.600 3-3.500 3H9.500c2 0 2.500-1 3-2.800z" fill="url(#copB)" />
      <path d="M7.500 1.500H15c1.500 0 2 1 2.500 2.800L18.300 7H14c-1.500 0-2.200.8-2.700 2.500L9.500 15.500C9 17.200 8 18 6.500 18H4C1.500 18 .8 16 1.400 13.800L4 4.500c.6-2 1.600-3 3.500-3z" fill="url(#copA)" />
      <path d="M9 1.500h6c1.500 0 2 1 2.500 2.800L18.300 7h-4c-2 0-1-5.500-5.300-5.500z" fill="#1b4fb3" />
      <rect x="6" y="16" width="18" height="8" rx="1.500" fill="#fcc40c" />
      <text x="15" y="22.600" fontSize="7.500" fontWeight="700" textAnchor="middle" fill="#222" fontFamily="Noto Sans">
        PRE
      </text>
    </svg>
  );
}

function TaskbarApps() {
  const apps: { name: string; icon: ReactNode; running?: boolean; current?: boolean }[] = [
    { name: 'Copilot', icon: <CopilotIcon /> },
    {
      name: '任务视图',
      icon: (
        <svg viewBox="0 0 24 24" className="h-6 w-6">
          <rect x="6.500" y="1" width="17.500" height="15.500" rx="1" fill="#f6f6f6" />
          <rect y="7" width="18" height="16" rx="1" fill="#2f2f2f" />
          <path d="M6.500 7H18v9.500H6.500z" fill="#bfbfbf" />
        </svg>
      ),
    },
    {
      name: '文件资源管理器',
      current: true,
      icon: (
        <svg viewBox="0 0 24 24" className="h-6 w-6">
          <path d="M0 3Q0 1.500 1.500 1.500h7L10.500 4v4H0z" fill="#d99a0b" />
          <path d="M0 6h8.500l2-2.500H23q1 0 1 1V22q0 1-1 1H1q-1 0-1-1z" fill="#fdc83a" />
          <path d="M0 21h24v1q0 1-1 1H1q-1 0-1-1z" fill="#f0ac1c" />
          <path d="M4 23v-5q0-2 2-2h11.500q2 0 2 2v5z" fill="#1b7fcf" />
          <path d="M8 20h7.500" stroke="#0b4f96" strokeWidth="1.300" />
        </svg>
      ),
    },
    {
      name: 'Microsoft Store',
      icon: (
        <svg viewBox="0 0 24 24" className="h-6 w-6">
          <path d="M6.500 7V2.500q0-1.500 1.500-1.500h8q1.500 0 1.500 1.500V7" fill="none" stroke="#31c0f2" strokeWidth="1.800" />
          <path d="M.5 6h23v14.500q0 3-3 3h-17q-3 0-3-3z" fill="#14508f" />
          <path d="M.5 15h23v5.500q0 3-3 3h-17q-3 0-3-3z" fill="#173d70" />
          <path d="M7.300 9.500h4.300v4.300H7.300z" fill="#f25022" />
          <path d="M12.400 9.500h4.300v4.300h-4.300z" fill="#7fba00" />
          <path d="M7.300 14.600h4.300v4.300H7.300z" fill="#00a4ef" />
          <path d="M12.400 14.600h4.300v4.300h-4.300z" fill="#ffb900" />
        </svg>
      ),
    },
    {
      name: 'Microsoft Edge',
      running: true,
      icon: (
        <svg viewBox="0 0 24 24" className="h-6 w-6">
          <defs>
            <linearGradient id="edge" x1="0" y1="0" x2="1" y2="0">
              <stop offset="0" stopColor="#1b9de2" />
              <stop offset=".5" stopColor="#2fc2c5" />
              <stop offset="1" stopColor="#6be04e" />
            </linearGradient>
          </defs>
          <path d="M.2 10.500C1 4.500 6 0 12 0c7 0 12 4.800 12 10.300 0 3.700-2.800 6-6 6-3 0-4.500-1-4.500-2 0-.8 1.200-1.200 1.200-3.300C14.700 8.500 12 6.300 8.500 6.300c-4 0-7 2-8.300 4.200z" fill="url(#edge)" />
          <path d="M.2 10.500C1.500 8 4.500 6.300 8.500 6.300c3 0 5.300 1.500 6 3.700-1-.8-2.300-1.200-3.500-.8-3 .9-4.500 4-3.500 7.500 1 3.700 4.200 6.300 7.500 7C7 25.500 0 19.500 0 12z" fill="#1272c6" />
          <path d="M9.500 10c-2.500 1.600-3.300 5-1.500 8.300 2 3.700 6 5.700 9.500 4.500 2.300-.8 4-2.400 5-4 .3-.5-.2-.9-.7-.6-3.500 1.800-8 1.500-10.500-1.400-1.700-2-2.600-4.700-1.800-6.800z" fill="#0c4fa0" />
        </svg>
      ),
    },
    {
      name: 'Wings',
      icon: (
        <svg viewBox="0 0 24 24" className="h-6 w-6">
          <rect x=".5" y=".5" width="23" height="23" rx="4.500" fill="#1c1f23" stroke="#3a3e43" />
          <path d="M5.500 5 10 8.500v10.500L7.800 17 5.500 12zM18.500 5 14 8.500v10.500l2.200-2 2.300-5z" fill="none" stroke="#9da0a4" />
          <path d="M12 5v15M7.800 9v6M16.200 9v6" stroke="#85898d" strokeWidth=".9" />
        </svg>
      ),
    },
    {
      name: 'Visual Studio Code',
      icon: (
        <svg viewBox="0 0 24 24" className="h-6 w-6">
          <path d="m17.500.3 6 2.700v18l-6 2.700z" fill="#2fa8ee" />
          <path d="M17.500.3 1 15.500q-.8.800 0 1.600l1.500 1.300q.7.500 1.400 0L18 7.500z" fill="#0b6fb8" />
          <path d="M17.500 23.700 1 8.500Q.2 7.700 1 6.900l1.500-1.300q.7-.5 1.400 0L18 16.500z" fill="#1689d2" />
        </svg>
      ),
    },
    {
      name: 'Notes',
      running: true,
      icon: (
        <svg viewBox="0 0 24 24" className="h-6 w-6">
          <rect width="24" height="24" rx="4.500" fill="#5b8bfd" />
          <path d="m6 17.500 1-5.500 6.500-6.500 3-.5 2 4.500-1 2-6 6z" fill="#fff" />
          <path d="m13.500 5.500 3-.5 2 4.500-1 2z" fill="#dbe6ff" />
        </svg>
      ),
    },
    {
      name: 'Game',
      running: true,
      icon: (
        <svg viewBox="0 0 24 24" className="h-6 w-6">
          <circle cx="12" cy="12" r="10.500" fill="#071833" stroke="#1468b4" strokeWidth="1" />
          <path d="M3 7c4-4 9-4 11-1 3-1 6 1 7 4M3 11c3-3 7-3 9-2M16 3c3 2 5 6 4 11" fill="none" stroke="#1784d6" strokeWidth="1.400" />
          <circle cx="12.500" cy="14.500" r="4.500" fill="#0a2c58" stroke="#1db4f5" strokeWidth="1.800" />
          <circle cx="12.500" cy="14.500" r="1.500" fill="#1470c8" />
        </svg>
      ),
    },
  ];

  return (
    <div className="flex gap-1.5">
      {apps.map((app) => (
        <button
          key={app.name}
          aria-label={app.name}
          className={`relative flex h-[38px] w-[38px] items-center justify-center rounded ${
            app.current ? 'bg-[#ebeff5] shadow-[0_0_1px_rgba(0,0,0,0.25)]' : ''
          }`}
        >
          {app.icon}
          {app.current && <span className="absolute bottom-0 h-[3px] w-4 rounded-full bg-[#0078d4]" />}
          {app.running && <span className="absolute bottom-0 h-[3px] w-1.5 rounded-full bg-[#828488]" />}
        </button>
      ))}
    </div>
  );
}

function Taskbar() {
  return (
    <div className="relative flex h-12 items-center justify-between border-t border-[#a9adb0] bg-linear-to-r from-[#d4e1e9] via-[#d9dee7] via-45% to-[#dcdddb] to-65% pb-px text-xs text-[#1b1b1b]">
      <button className="flex flex-1 items-center pl-5">
        <span className="relative flex h-8 w-[26px] items-end">
          <svg viewBox="0 0 24 24" className="h-6 w-6">
            <path d="M21 3c2 8-3 16-10 16-5 0-9-3-11-6 4 2 9 1 12-2 2-2 3-4 3-6z" fill="#f5941f" />
            <path d="M0 13c4 2 9 1 12-2 2 3 5 4 8 2-2 4-5 6-9 6-5 0-9-3-11-6z" fill="#f8a83a" />
          </svg>
          <span className="absolute top-0 left-2.5 h-4 w-4 rounded-full bg-[#c42b1c] text-center text-[11px] leading-4 text-white">1</span>
        </span>
        <span className="ml-[5px] text-left leading-4">
          20°C
          <span className="block text-[#555]">晴朗</span>
        </span>
      </button>
      <div className="flex items-center pl-2">
        <button aria-label="开始" className="flex">
          <svg viewBox="0 0 24 24" className="h-6 w-6">
            <defs>
              <linearGradient id="start" x1="0" y1="0" x2="1" y2="1">
                <stop offset="0" stopColor="#4cc6f7" />
                <stop offset="1" stopColor="#0468c8" />
              </linearGradient>
            </defs>
            <path d="M0 0h11.500v11.500H0zM12.500 0H24v11.500H12.500zM0 12.500h11.500V24H0zM12.500 12.500H24V24H12.500z" fill="url(#start)" />
          </svg>
        </button>
        <label className="mr-1.5 ml-[13px] flex h-[31px] w-[218px] items-center rounded-full border border-[#c6cbd2] bg-[#f4f6f9] pl-2.5">
          <svg viewBox="0 0 16 16" className="h-4 w-4" fill="none" stroke="#222" strokeWidth="1.600">
            <circle cx="6.800" cy="6.500" r="5.500" />
            <path d="m10.700 10.500 4.300 4.700" />
          </svg>
          <input
            aria-label="搜索"
            placeholder="搜索"
            className="ml-2.5 min-w-0 flex-1 bg-transparent text-sm outline-none placeholder:text-[#555]"
          />
        </label>
        <TaskbarApps />
      </div>
      <div className="flex flex-1 items-center justify-end pr-[22px]">
        <svg viewBox="0 0 12 12" className="h-3 w-3" fill="none" stroke="#222" strokeWidth="1.400">
          <path d="m1 8.500 5-5 5 5" />
        </svg>
        <svg viewBox="0 0 16 16" className="ml-[18px] h-4 w-4">
          <ellipse cx="6" cy="6.500" rx="6" ry="5" fill="#2ad35c" />
          <path d="m2 10 0 3 3-2z" fill="#2ad35c" />
          <ellipse cx="11.500" cy="10" rx="4.500" ry="3.800" fill="#f0f0f0" />
          <path d="M4 4.500v1.500M8 4.500v1.500" stroke="#155c2c" />
        </svg>
        <span className="ml-4 text-base">英</span>
        <svg viewBox="0 0 18 18" className="ml-4 h-[18px] w-[18px]" fill="none" stroke="#222" strokeWidth="1.200">
          <path d="M11 2.500H2.500Q1 2.500 1 4v8q0 1.500 1.500 1.500h11V8M5 16.500h7M6.500 13.500v3M10.500 13.500v3" />
          <path d="M12.500 1.500h4V5q0 1.500-2 1.500T12.500 5zM14.500 6.500V16" />
        </svg>
        <svg viewBox="0 0 16 16" className="ml-1.5 h-4 w-4" fill="none" stroke="#222" strokeWidth="1.200">
          <path d="M1 5.800h2.500L7 2.500v11L3.500 10.200H1zM9.500 5.500q1.500 2.500 0 5M11.500 4q2.500 4 0 8M13.500 2.500q3.200 5.500 0 11" />
        </svg>
        <div className="ml-3 w-[60px] text-right leading-4">
          19:25:41
          <br />
          2023/11/2
        </div>
        <svg viewBox="0 0 12 14" className="ml-2.5 h-3.5 w-3" fill="#0a4a9e">
          <path d="M6 .5q4.800 0 4.800 5V9L12 10.500V11H0v-.5L1.200 9V5.500q0-5 4.800-5zM4 12h4q-.5 1.700-2 1.700T4 12z" />
        </svg>
      </div>
      <span className="absolute right-4 bottom-1 text-[15px] leading-6 whitespace-nowrap text-white/60 [text-shadow:1px_1px_1px_#777]">
        CSDN @虎小猪
      </span>
    </div>
  );
}

export default function App() {
  return (
    <div className="relative flex min-h-screen flex-col bg-white font-['Noto_Sans','Noto_Sans_CJK_SC',sans-serif] text-[#1b1b1b]">
      <TitleBar />
      <NavBar />
      <CommandBar />
      <div className="flex flex-1">
        <Sidebar />
        <FileList />
      </div>
      <StatusBar />
      <Taskbar />
      <ContextMenu />
      <SpeedWidget />
    </div>
  );
}
